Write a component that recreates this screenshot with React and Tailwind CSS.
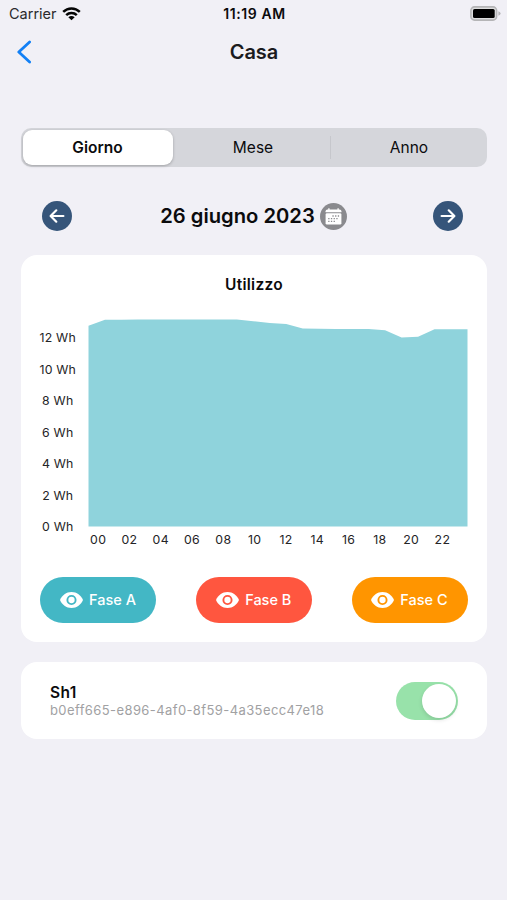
import React, { useState } from 'react';

const PERIODS = ['Giorno', 'Mese', 'Anno'];
const Y_TICKS = ['12 Wh', '10 Wh', '8 Wh', '6 Wh', '4 Wh', '2 Wh', '0 Wh'];
const X_TICKS = ['00', '02', '04', '06', '08', '10', '12', '14', '16', '18', '20', '22'];

// Hourly usage, in Wh
const USAGE = [
  12.77, 13.14, 13.14, 13.16, 13.16, 13.16, 13.16, 13.16, 13.16, 13.16, 13.05, 12.93,
  12.88, 12.58, 12.57, 12.56, 12.56, 12.55, 12.48, 12.02, 12.07, 12.54, 12.54, 12.54,
];

const PHASES = [
  { name: 'Fase A', color: 'bg-[#43b7c5]', pupil: '#43b7c5' },
  { name: 'Fase B', color: 'bg-[#ff563f]', pupil: '#ff563f' },
  { name: 'Fase C', color: 'bg-[#ff9500]', pupil: '#ff9500' },
];

function WifiIcon() {
  return (
    <svg width="19" height="14" viewBox="0 0 19 14" fill="none" stroke="#050505" strokeWidth="2.5">
      <path d="M1.2 4.9C5.9 .3 13.1 .3 17.8 4.9" />
      <path d="M4.2 8.2C7.1 5.4 11.9 5.4 14.8 8.2" />
      <path d="M9.5 13.2 6.3 10.2Q9.5 7.7 12.7 10.2Z" fill="#050505" stroke="none" />
    </svg>
  );
}

function BatteryIcon() {
  return (
    <svg width="31" height="15" viewBox="0 0 31 15">
      <rect x=".9" y=".9" width="25.7" height="13.2" rx="3.6" fill="#dededf" stroke="#b5b5b7" strokeWidth="1.6" />
      <rect x="3" y="3" width="21.7" height="9" rx="1.6" fill="#000" />
      <path d="M28.4 5.2Q30.6 6 30.6 7.5T28.4 9.8Z" fill="#b5b5b7" />
    </svg>
  );
}

function ArrowButton({ flip }) {
  return (
    <button className="w-[30px] h-[30px] rounded-full bg-[#36557a] flex items-center justify-center">
      <svg
        width="16"
        height="16"
        viewBox="0 0 16 16"
        fill="none"
        stroke="#fff"
        strokeWidth="2.2"
        strokeLinecap="round"
        strokeLinejoin="round"
        className={flip ? 'rotate-180' : ''}
      >
        <path d="M14.4 8H2M7.3 2.3 1.6 8l5.7 5.7" />
      </svg>
    </button>
  );
}

function CalendarIcon() {
  return (
    <svg width="27" height="27" viewBox="0 0 27 27">
      <circle cx="13.5" cy="13.5" r="13.5" fill="#8a8a8e" />
      <path d="M5.6 8.3Q5.6 6.5 7.4 6.5H19.6Q21.4 6.5 21.4 8.3V9.2H5.6Z" fill="#fff" />
      <path d="M8.9 5.2V7M18.1 5.2V7" stroke="#fff" strokeWidth="1.3" />
      <rect x="5.6" y="10.2" width="15.8" height="11.4" rx="1.4" fill="#fff" />
      <path
        d="M12.4 13h1.3M15.1 13h1.3M17.8 13h1.3M8.2 15.7h1.3M10.9 15.7h1.3M13.6 15.7h1.3M16.3 15.7h1.3M8.2 18.4h1.3M10.9 18.4h1.3M13.6 18.4h1.3"
        stroke="#8a8a8e"
        strokeWidth="1.3"
      />
    </svg>
  );
}

function EyeIcon({ pupil }) {
  return (
    <svg width="23" height="16" viewBox="0 0 23 16">
      <path d="M11.5 0C6.2 0 2 3.3 0 8c2 4.7 6.2 8 11.5 8S21 12.7 23 8C21 3.3 16.8 0 11.5 0Z" fill="#fff" />
      <circle cx="11.5" cy="8" r="4.1" fill="none" stroke={pupil} strokeWidth="1.9" />
    </svg>
  );
}

function UsageChart() {
  const top = USAGE.map((v, i) => `${(i * 379) / (USAGE.length - 1) + 0.5},${207.5 - v * 15.73}`).join(' ');

  return (
    <div className="flex mt-[23px]">
      <div className="w-[67.5px] pt-[3.5px] flex flex-col">
        {Y_TICKS.map((t) => (
          <span key={t} className="h-[31.5px] w-full pl-[7px] flex items-center justify-center text-[12.3px] tracking-[0.2px] text-[#242426]">
            {t}
          </span>
        ))}
      </div>
      <div className="w-[380px]">
        <svg width="380" height="208" viewBox="0 0 380 208" className="block">
          <polygon points={`0.5,207.5 ${top} 379.5,207.5`} fill="#8fd3dc" />
        </svg>
        <div className="flex -ml-[5.5px] mt-[4px]">
          {X_TICKS.map((t) => (
            <span key={t} className="w-[31.3px] shrink-0 text-center text-[12.3px] leading-[18px] tracking-[0.3px] text-[#242426]">
              {t}
            </span>
          ))}
        </div>
      </div>
    </div>
  );
}

export default function App() {
  const [period, setPeriod] = useState('Giorno');
  const [enabled, setEnabled] = useState(true);

  return (
    <div className="w-full h-screen bg-[#f1f0f6] font-['Inter',sans-serif] text-[#0b0b0d] overflow-hidden">
      {/* Status bar */}
      <div className="h-[28px] pl-[9px] pr-[6px] grid grid-cols-3 items-center">
        <div className="flex items-center gap-[5px] -mt-[1px] text-[14.5px] text-[#2a2a2c]">
          Carrier
          <WifiIcon />
        </div>
        <span className="text-center text-[14px] font-semibold tracking-[0.6px] -mt-[2px] -ml-[1px]">11:19 AM</span>
        <div className="flex justify-end -mt-[2px]">
          <BatteryIcon />
        </div>
      </div>

      {/* Navigation bar */}
      <div className="h-[48px] px-[17px] grid grid-cols-3 items-center">
        <svg width="15" height="24" viewBox="0 0 15 24" fill="none" stroke="#1380f5" strokeWidth="2.8" strokeLinecap="round" strokeLinejoin="round">
          <path d="M12.6 2 1.8 12l10.8 10" />
        </svg>
        <h1 className="text-center text-[20px] font-semibold text-[#1b1b1e] pl-[1px]">Casa</h1>
      </div>

      <div className="px-[20.5px] pt-[52px]">
        {/* Period selector */}
        <div className="h-[39px] p-[2px] rounded-[10px] bg-[#d5d6db] grid grid-cols-[150px_1fr_155px] text-[15.5px]">
          {PERIODS.map((p, i) => (
            <button
              key={p}
              onClick={() => setPeriod(p)}
              className={`relative ${i > 0 ? 'pl-[4px]' : ''} rounded-[9px] ${period === p ? 'bg-white font-semibold shadow-[0_1px_3px_rgba(0,0,0,0.25)]' : ''}`}
            >
              {p}
              {i === 2 && period === 'Giorno' && (
                <span className="absolute left-0 top-[6px] h-[23px] w-px bg-[#c6c7cc]"></span>
              )}
            </button>
          ))}
        </div>

        {/* Date picker */}
        <div className="mt-[34px] pl-[21.5px] pr-[23.5px] h-[30px] flex items-center justify-between">
          <ArrowButton />
          <div className="flex items-center gap-[5px] pl-[2px]">
            <span className="text-[20.2px] font-semibold whitespace-nowrap">26 giugno 2023</span>
            <CalendarIcon />
          </div>
          <ArrowButton flip />
        </div>

        {/* Usage */}
        <div className="mt-[24px] h-[387px] rounded-[16px] bg-white pt-[18px]">
          <h2 className="text-center text-[15.5px] leading-[23px] tracking-[0.3px] pl-[1px] font-semibold">Utilizzo</h2>
          <UsageChart />
          <div className="mt-[28px] pl-[19.5px] pr-[19px] flex justify-between">
            {PHASES.map((p) => (
              <button
                key={p.name}
                className={`w-[116px] h-[46px] rounded-full flex items-center justify-center gap-[6px] text-[14.5px] font-medium text-white ${p.color}`}
              >
                <EyeIcon pupil={p.pupil} />
                {p.name}
              </button>
            ))}
          </div>
        </div>

        {/* Device */}
        <div className="mt-[20px] h-[77px] rounded-[16px] bg-white pl-[29.5px] pr-[29px] flex items-center justify-between">
          <div>
            <p className="text-[15.5px] leading-[19px] tracking-[0.4px] font-semibold">Sh1</p>
            <p className="text-[13px] leading-[16px] tracking-[0.4px] text-[#a1a1a3]">b0eff665-e896-4af0-8f59-4a35ecc47e18</p>
          </div>
          <button
            onClick={() => setEnabled(!enabled)}
            className={`w-[62px] h-[38px] rounded-full p-[2px] flex ${enabled ? 'justify-end bg-[#98e2aa]' : 'justify-start bg-[#e9e9ea]'}`}
          >
            <span className="w-[34px] h-[34px] rounded-full bg-white shadow-[0_2px_4px_rgba(0,0,0,0.12)]"></span>
          </button>
        </div>
      </div>
    </div>
  );
}
